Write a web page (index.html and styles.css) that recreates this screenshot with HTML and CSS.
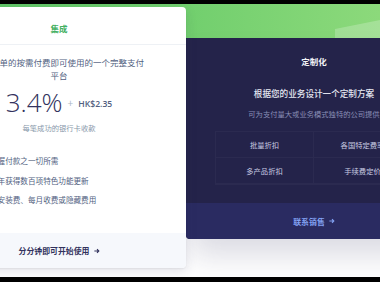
FILE: index.html
```html
<!DOCTYPE html>
<html lang="zh-CN">
<head>
<meta charset="utf-8">
<title>定价</title>
<link rel="stylesheet" href="styles.css">
</head>
<body>
<div class="frame">
  <div class="bar"></div>
  <main class="stage">
    <div class="band">
      <svg class="band-deco" viewBox="0 0 380 34" preserveAspectRatio="none" aria-hidden="true">
        <polygon points="335,34 335,25 380,16 380,34" fill="rgba(255,255,255,0.22)"/>
      </svg>
    </div>
    <div class="cards">
      <section class="card card-int">
        <header class="int-head">集成</header>
        <div class="int-body">
          <p class="lead">一个简单的按需付费即可使用的一个完整支付<br>平台</p>
          <div class="price">
            <span class="pct">3.4%</span>
            <span class="plus">+</span>
            <span class="fixed">HK$2.35</span>
          </div>
          <p class="note">每笔成功的银行卡收款</p>
          <ul class="features">
            <li><svg class="check" viewBox="0 0 10 10"><path d="M2 5.2 4.2 7.4 8 2.8" fill="none" stroke="#44b062" stroke-width="1.4"/></svg><span>掌握付款之一切所需</span></li>
            <li><svg class="check" viewBox="0 0 10 10"><path d="M2 5.2 4.2 7.4 8 2.8" fill="none" stroke="#44b062" stroke-width="1.4"/></svg><span>每年获得数百项特色功能更新</span></li>
            <li><svg class="check" viewBox="0 0 10 10"><path d="M2 5.2 4.2 7.4 8 2.8" fill="none" stroke="#44b062" stroke-width="1.4"/></svg><span>无安装费、每月收费或隐藏费用</span></li>
          </ul>
        </div>
        <footer class="int-foot">分分钟即可开始使用<svg class="arrow" viewBox="0 0 8 8"><path d="M0.5 4H6M4 1.6 6.4 4 4 6.4" fill="none" stroke="currentColor" stroke-width="1.5"/></svg></footer>
      </section>
      <section class="card card-custom">
        <header class="custom-head">定制化</header>
        <div class="custom-body">
          <h3 class="custom-title">根据您的业务设计一个定制方案</h3>
          <p class="custom-sub">可为支付量大或业务模式独特的公司提供</p>
          <div class="grid">
            <div class="cell">批量折扣</div>
            <div class="cell">各国特定费率</div>
            <div class="cell">多产品折扣</div>
            <div class="cell">手续费定价</div>
          </div>
        </div>
        <footer class="custom-foot">联系销售<svg class="arrow" viewBox="0 0 8 8"><path d="M0.5 4H6M4 1.6 6.4 4 4 6.4" fill="none" stroke="currentColor" stroke-width="1.5"/></svg></footer>
      </section>
    </div>
  </main>
  <div class="bar bar-bottom"></div>
</div>
</body>
</html>
```
FILE: styles.css
```css
* { box-sizing: border-box; }
html, body { margin: 0; padding: 0; }
body {
  width: 380px;
  height: 282px;
  overflow: hidden;
  background: #fff;
  font-family: "Noto Sans CJK SC", "Noto Sans", sans-serif;
}
.frame {
  width: 380px;
  height: 282px;
  display: flex;
  flex-direction: column;
  overflow: hidden;
}
.bar { height: 4px; background: #000; flex: none; }
.bar-bottom { height: 5px; }
.stage {
  flex: 1;
  overflow: hidden;
  background: #fff;
}
.band {
  height: 34px;
  background: linear-gradient(90deg, #5fc466 0%, #72cf6e 50%, #8cd97b 100%);
}
.band-deco { display: block; width: 380px; height: 34px; }
.cards {
  display: flex;
  align-items: flex-start;
  margin-top: -34px;
  margin-left: -68px;
  width: 520px;
}
.card { flex: none; }

/* integrated card */
.card-int {
  width: 254px;
  margin-top: 3px;
  background: #fff;
  border-radius: 4px;
  box-shadow: 0 4px 12px rgba(50, 50, 93, 0.13), 0 1px 2px rgba(0,0,0,0.06);
  position: relative;
  z-index: 2;
  overflow: hidden;
}
.int-head {
  padding: 15px 0 10px;
  line-height: 12px;
  font-size: 8.5px;
  font-weight: 600;
  color: #44b062;
  text-align: center;
  border-bottom: 1px solid #eef1f5;
}
.int-body {
  padding: 10.5px 0 27px;
  text-align: center;
}
.lead {
  margin: 0;
  font-size: 8.5px;
  line-height: 13px;
  color: #525f7f;
}
.price {
  margin-top: 5.5px;
  height: 30px;
  display: flex;
  justify-content: center;
  align-items: center;
  gap: 5px;
}
.pct {
  font-family: "Open Sans", "Noto Sans", sans-serif;
  font-weight: 300;
  font-size: 26px;
  line-height: 30px;
  color: #32325d;
}
.plus {
  font-family: "Open Sans", sans-serif;
  font-size: 10px;
  color: #aab7c4;
  margin-top: 2px;
}
.fixed {
  font-family: "Open Sans", sans-serif;
  font-weight: 600;
  font-size: 8.6px;
  color: #525f7f;
  margin-top: 3px;
}
.note {
  margin: 5.5px 0 0;
  font-size: 7.3px;
  line-height: 11px;
  color: #8898aa;
}
.features {
  list-style: none;
  margin: 21.5px 0 0;
  padding: 0 0 0 40px;
  text-align: left;
  display: flex;
  flex-direction: column;
  gap: 7.5px;
}
.features li {
  display: flex;
  align-items: center;
  gap: 8px;
  font-size: 7.6px;
  line-height: 12px;
  color: #525f7f;
}
.check { width: 10px; height: 10px; flex: none; }
.int-foot {
  height: 35px;
  background: #f6f8fc;
  display: flex;
  align-items: center;
  justify-content: center;
  gap: 4px;
  font-size: 7.9px;
  font-weight: 600;
  color: #32325d;
}
.arrow { width: 6px; height: 6px; }

/* custom card */
.card-custom {
  width: 256px;
  margin-top: 34px;
  background: #24234a;
  border-radius: 0 0 4px 4px;
  box-shadow: 0 20px 30px -4px rgba(50, 50, 93, 0.18);
  position: relative;
  z-index: 1;
  text-align: center;
}
.custom-head {
  height: 46px;
  line-height: 46px;
  font-size: 8.5px;
  font-weight: 600;
  color: #f2f3f8;
}
.custom-body { padding: 2px 29px 18px; }
.custom-title {
  margin: 0;
  font-size: 8.6px;
  line-height: 14px;
  font-weight: 500;
  color: #e6e8f2;
}
.custom-sub {
  margin: 8px 0 0;
  font-size: 7.3px;
  line-height: 12px;
  color: #8a8fb6;
  white-space: nowrap;
}
.grid {
  margin-top: 11px;
  display: grid;
  grid-template-columns: 1fr 1fr;
  grid-auto-rows: 26px;
  border: 1px solid rgba(255, 255, 255, 0.035);
}
.cell {
  display: flex;
  align-items: center;
  justify-content: center;
  font-size: 7.3px;
  color: #c9cce2;
  border-right: 1px solid rgba(255, 255, 255, 0.035);
  border-bottom: 1px solid rgba(255, 255, 255, 0.035);
}
.custom-foot {
  height: 36px;
  background: #2a2b61;
  display: flex;
  align-items: center;
  justify-content: center;
  gap: 4px;
  font-size: 7.9px;
  font-weight: 600;
  color: #82a1f2;
  border-radius: 0 0 4px 4px;
}
```
